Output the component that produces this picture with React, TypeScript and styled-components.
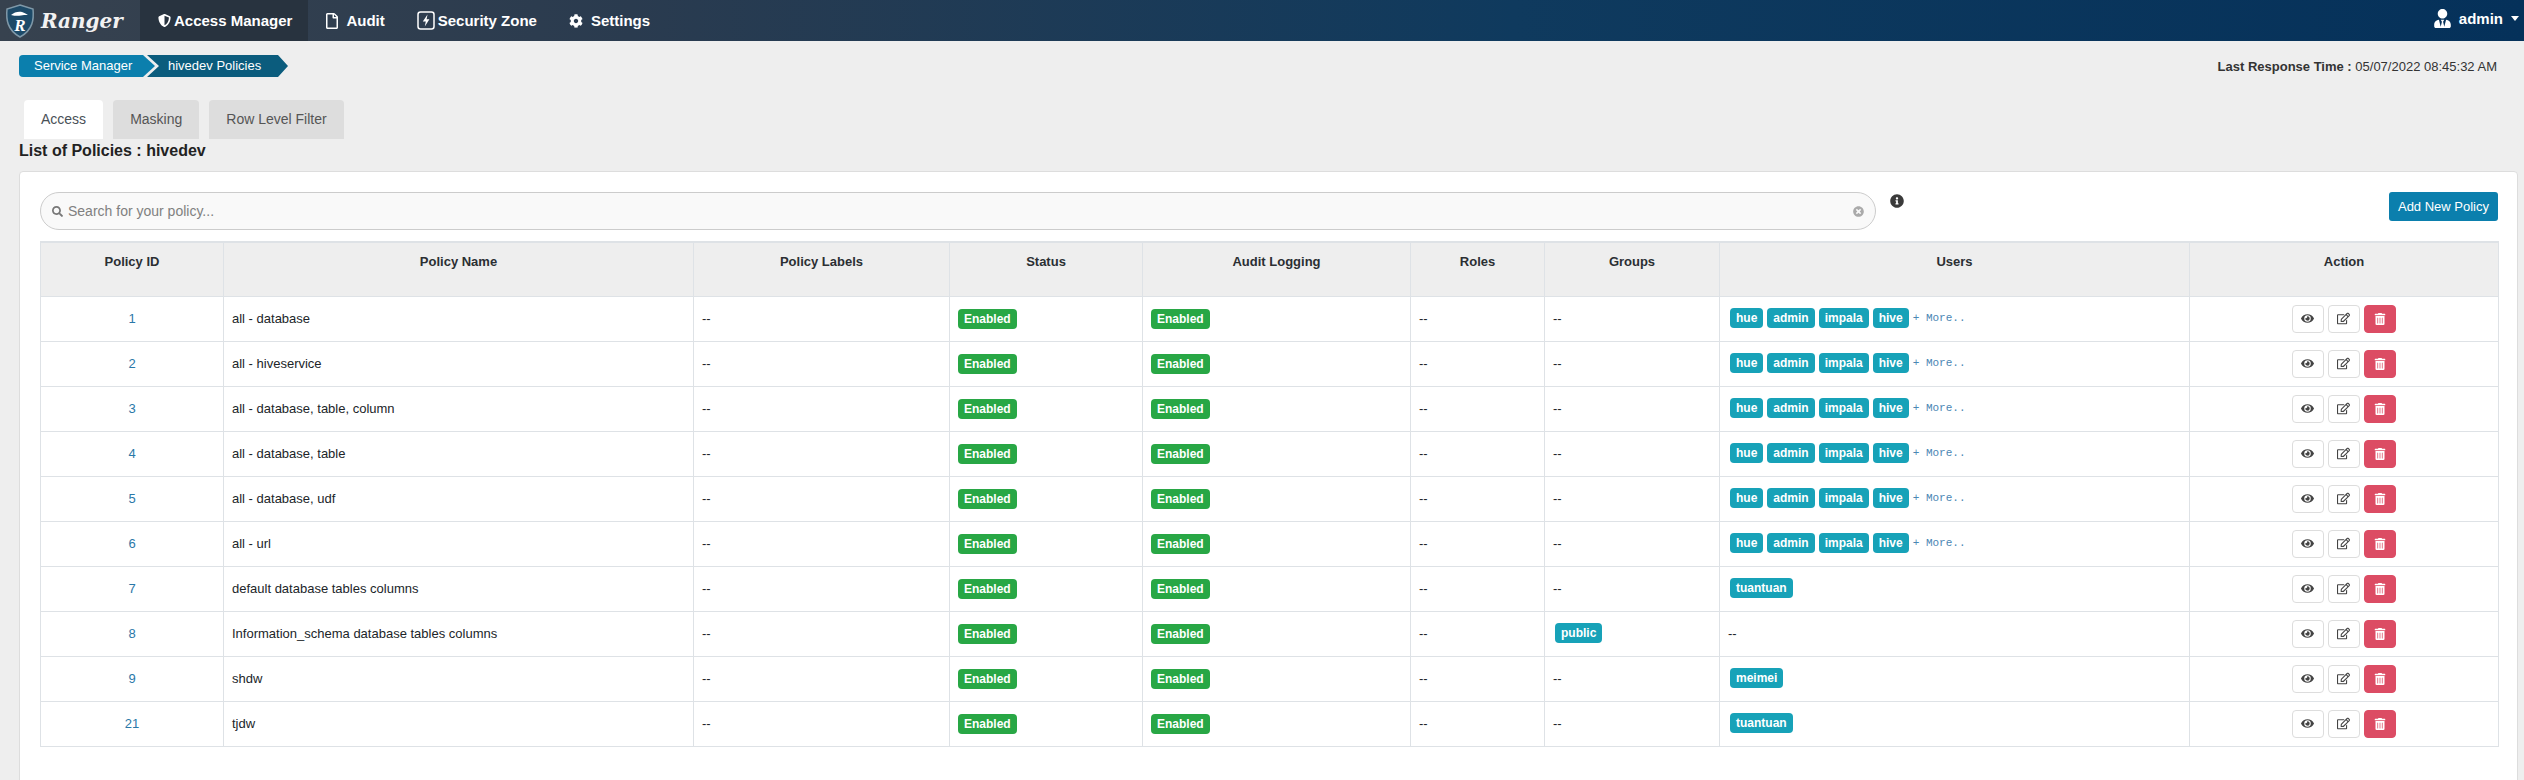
import React from "react";
import styled, { createGlobalStyle } from "styled-components";
import { FaCog, FaEye, FaInfoCircle, FaRegEdit, FaRegFile, FaSearch, FaShieldAlt, FaTimesCircle, FaTrashAlt, FaUserTie } from "react-icons/fa";

const Global = createGlobalStyle`
  html, body { margin: 0; padding: 0; background: #eeeeee; }
  body { font-family: "Liberation Sans", Arial, sans-serif; font-size: 13px; color: #212529; }
  * { box-sizing: border-box; }
`;

const Page = styled.div`
  width: 2524px;
  height: 780px;
  overflow: hidden;
  background: #eeeeee;
`;

const Navbar = styled.nav`
  height: 41px;
  display: flex;
  align-items: stretch;
  color: #fff;
  background: linear-gradient(90deg, #37424f 0%, #2a3b4f 25%, #0f3a5e 60%, #05315a 100%);
`;

const Brand = styled.div`
  width: 140px;
  display: flex;
  align-items: center;
  padding-left: 5px;
  gap: 6px;
`;

const BrandName = styled.span`
  font-family: "DejaVu Serif", serif;
  font-style: italic;
  font-weight: 700;
  font-size: 20px;
  color: #f2f2f2;
`;

const NavItem = styled.div<{ $active?: boolean; $gap: number }>`
  display: flex;
  align-items: center;
  gap: ${(p) => p.$gap}px;
  padding: 0 16px;
  font-size: 15px;
  font-weight: 700;
  background: ${(p) => (p.$active ? "#28333f" : "transparent")};
  padding-left: ${(p) => (p.$active ? "18px" : "16px")};
`;

const UserMenu = styled.div`
  margin-left: auto;
  padding-right: 5px;
  display: flex;
  align-items: center;
  font-size: 15px;
  font-weight: 700;
  gap: 7px;
  padding-bottom: 4px;
`;

const Caret = styled.span`
  width: 0;
  height: 0;
  margin-left: 1px;
  border-left: 4.5px solid transparent;
  border-right: 4.5px solid transparent;
  border-top: 5px solid #fff;
`;

const TopRow = styled.div`
  margin-top: 14px;
  height: 22px;
  padding: 0 27px 0 19px;
  display: flex;
  justify-content: space-between;
  align-items: center;
`;

const Crumbs = styled.div`
  display: flex;
  height: 22px;
`;

const CrumbFirst = styled.div`
  width: 136px;
  height: 22px;
  padding-left: 15px;
  line-height: 21px;
  color: #fff;
  background: #0b7fad;
  border-radius: 4px 0 0 4px;
  clip-path: polygon(0 0, 124px 0, 136px 50%, 124px 100%, 0 100%);
`;

const CrumbSecond = styled.div`
  width: 141px;
  height: 22px;
  margin-left: -8px;
  padding-left: 21px;
  line-height: 21px;
  color: #fff;
  background: #0b5c7d;
  clip-path: polygon(0 0, 131px 0, 141px 50%, 131px 100%, 0 100%, 12px 50%);
`;

const ResponseTime = styled.div`
  font-size: 13px;
  color: #333;
`;

const Tabs = styled.div`
  margin-top: 23px;
  padding-left: 24px;
  display: flex;
  gap: 10px;
  height: 39px;
`;

const Tab = styled.div<{ $active?: boolean }>`
  padding: 0 17px;
  line-height: 38px;
  font-size: 14px;
  color: ${(p) => (p.$active ? "#495057" : "#555")};
  background: ${(p) => (p.$active ? "#fff" : "#dddddd")};
  border-radius: 4px 4px 0 0;
`;

const Title = styled.h1`
  margin: 0;
  height: 32px;
  padding: 2px 0 0 19px;
  font-size: 16px;
  line-height: 20px;
  font-weight: 700;
  color: #222;
`;

const Panel = styled.section`
  margin: 0 6px 0 19px;
  height: 640px;
  padding: 20px 20px 0;
  background: #fff;
  border: 1px solid #dddddd;
  border-radius: 4px 4px 0 0;
`;

const Toolbar = styled.div`
  height: 49px;
  display: flex;
  align-items: flex-start;
`;

const SearchBox = styled.div`
  width: 1836px;
  height: 38px;
  display: flex;
  align-items: center;
  padding: 0 11px;
  gap: 5px;
  background: #f9f9f9;
  border: 1px solid #cccccc;
  border-radius: 19px;
  color: #777;
`;

const Placeholder = styled.span`
  flex: 1;
  font-size: 14px;
  color: #808080;
`;

const InfoIcon = styled(FaInfoCircle)`
  margin: 2px 0 0 14px;
  font-size: 14px;
  color: #3a3a3a;
`;

const AddButton = styled.button`
  margin-left: auto;
  margin-right: -1px;
  width: 109px;
  height: 29px;
  padding: 0;
  border: 0;
  border-radius: 3px;
  background: #0b7fad;
  color: #fff;
  font: 13px "Liberation Sans", Arial, sans-serif;
`;

const Table = styled.table`
  width: 2458px;
  table-layout: fixed;
  border-collapse: collapse;
  border: 1px solid #dee2e6;
`;

const Th = styled.th`
  height: 54px;
  padding: 10px 8px 0;
  vertical-align: top;
  text-align: center;
  font-size: 13px;
  line-height: 18px;
  font-weight: 700;
  color: #2b2f33;
  background: #eeeeee;
  border: 1px solid #dee2e6;
  border-top: 2px solid #dee2e6;
  border-bottom: 1px solid #dee2e6;
`;

const Td = styled.td<{ $center?: boolean }>`
  height: 45px;
  padding: 0 8px;
  font-size: 13px;
  line-height: 18px;
  vertical-align: middle;
  text-align: ${(p) => (p.$center ? "center" : "left")};
  border: 1px solid #dee2e6;
`;

const IdLink = styled.a`
  color: #2a78a8;
`;

const Badge = styled.span<{ $tone: "success" | "info" }>`
  display: inline-block;
  height: 20px;
  padding: 0 6px;
  margin: 0 4px 0 0;
  font-size: 12px;
  line-height: 20px;
  font-weight: 700;
  color: #fff;
  border-radius: 4px;
  vertical-align: middle;
  background: ${(p) => (p.$tone === "success" ? "#28a745" : "#17a2b8")};
`;

const BadgeRow = styled.div`
  display: flex;
  align-items: center;
  padding-left: 2px;
  margin-top: -1px;
`;

const More = styled.span`
  font-family: "Liberation Mono", monospace;
  font-size: 11px;
  color: #4b86b4;
  white-space: nowrap;
`;

const Actions = styled.div`
  display: flex;
  justify-content: center;
  gap: 4px;
  margin-left: -1px;
`;

const ActionButton = styled.button<{ $danger?: boolean }>`
  width: 32px;
  height: 28px;
  padding: 0;
  display: flex;
  align-items: center;
  justify-content: center;
  font-size: 13px;
  border-radius: 4px;
  color: ${(p) => (p.$danger ? "#fff" : "#444")};
  background: ${(p) => (p.$danger ? "#dc4c64" : "#fff")};
  border: 1px solid ${(p) => (p.$danger ? "#dc4c64" : "#dddddd")};
`;

const Bolt = () => (
  <svg width="18" height="19" viewBox="0 0 18 19">
    <rect x="1" y="1" width="16" height="17" rx="2.5" fill="none" stroke="#fff" strokeWidth="1.5" />
    <path d="M10.5 3.5 5.8 10.5h3l-1 5 4.6-7.2H9.6z" fill="#fff" />
  </svg>
);

const Logo = () => (
  <svg width="30" height="34" viewBox="0 0 30 34">
    <path d="M15 1 28 5c1 10 0 21-13 28C2 26 1 15 2 5z" fill="#1d4a68" stroke="#7f98a8" strokeWidth="1.5" />
    <path d="M6 11c3-3 8-4 11-3 2 .5 4 1.5 6 3-3 0-5 0-7 .5-3 .5-6 .5-10-.5z" fill="#fff" />
    <text x="15" y="27" textAnchor="middle" fontFamily="Liberation Serif, serif" fontWeight="700" fontStyle="italic" fontSize="17" fill="#fff">R</text>
  </svg>
);

const widths = [183, 470, 256, 193, 268, 134, 175, 470, 309];
const heads = ["Policy ID", "Policy Name", "Policy Labels", "Status", "Audit Logging", "Roles", "Groups", "Users", "Action"];
const common = ["hue", "admin", "impala", "hive"];

type Row = { id: number; name: string; groups?: string[]; users: string[]; more?: boolean };
const rows: Row[] = [
  { id: 1, name: "all - database", users: common, more: true },
  { id: 2, name: "all - hiveservice", users: common, more: true },
  { id: 3, name: "all - database, table, column", users: common, more: true },
  { id: 4, name: "all - database, table", users: common, more: true },
  { id: 5, name: "all - database, udf", users: common, more: true },
  { id: 6, name: "all - url", users: common, more: true },
  { id: 7, name: "default database tables columns", users: ["tuantuan"] },
  { id: 8, name: "Information_schema database tables columns", groups: ["public"], users: [] },
  { id: 9, name: "shdw", users: ["meimei"] },
  { id: 21, name: "tjdw", users: ["tuantuan"] },
];

const Labels = ({ items, more }: { items: string[]; more?: boolean }) =>
  items.length === 0 ? (
    <>--</>
  ) : (
    <BadgeRow>
      {items.map((t) => (
        <Badge key={t} $tone="info">{t}</Badge>
      ))}
      {more && <More>+ More..</More>}
    </BadgeRow>
  );

export default function App() {
  return (
    <Page>
      <Global />
      <Navbar>
        <Brand>
          <Logo />
          <BrandName>Ranger</BrandName>
        </Brand>
        <NavItem $active $gap={3}><FaShieldAlt size={13} />Access Manager</NavItem>
        <NavItem $gap={6}><FaRegFile size={16} />Audit</NavItem>
        <NavItem $gap={3}><Bolt />Security Zone</NavItem>
        <NavItem $gap={8}><FaCog size={14} />Settings</NavItem>
        <UserMenu>
          <FaUserTie size={19} />admin<Caret />
        </UserMenu>
      </Navbar>
      <TopRow>
        <Crumbs>
          <CrumbFirst>Service Manager</CrumbFirst>
          <CrumbSecond>hivedev Policies</CrumbSecond>
        </Crumbs>
        <ResponseTime><b>Last Response Time :</b> 05/07/2022 08:45:32 AM</ResponseTime>
      </TopRow>
      <Tabs>
        <Tab $active>Access</Tab>
        <Tab>Masking</Tab>
        <Tab>Row Level Filter</Tab>
      </Tabs>
      <Title>List of Policies : hivedev</Title>
      <Panel>
        <Toolbar>
          <SearchBox>
            <FaSearch size={11} />
            <Placeholder>Search for your policy...</Placeholder>
            <FaTimesCircle size={11} color="#aaa" />
          </SearchBox>
          <InfoIcon />
          <AddButton>Add New Policy</AddButton>
        </Toolbar>
        <Table>
          <colgroup>
            {widths.map((w, i) => (
              <col key={i} width={w} />
            ))}
          </colgroup>
          <thead>
            <tr>{heads.map((h) => <Th key={h}>{h}</Th>)}</tr>
          </thead>
          <tbody>
            {rows.map((r) => (
              <tr key={r.id}>
                <Td $center><IdLink>{r.id}</IdLink></Td>
                <Td>{r.name}</Td>
                <Td>--</Td>
                <Td><Badge $tone="success">Enabled</Badge></Td>
                <Td><Badge $tone="success">Enabled</Badge></Td>
                <Td>--</Td>
                <Td><Labels items={r.groups ?? []} /></Td>
                <Td><Labels items={r.users} more={r.more} /></Td>
                <Td>
                  <Actions>
                    <ActionButton><FaEye /></ActionButton>
                    <ActionButton><FaRegEdit /></ActionButton>
                    <ActionButton $danger><FaTrashAlt size={12} /></ActionButton>
                  </Actions>
                </Td>
              </tr>
            ))}
          </tbody>
        </Table>
      </Panel>
    </Page>
  );
}
